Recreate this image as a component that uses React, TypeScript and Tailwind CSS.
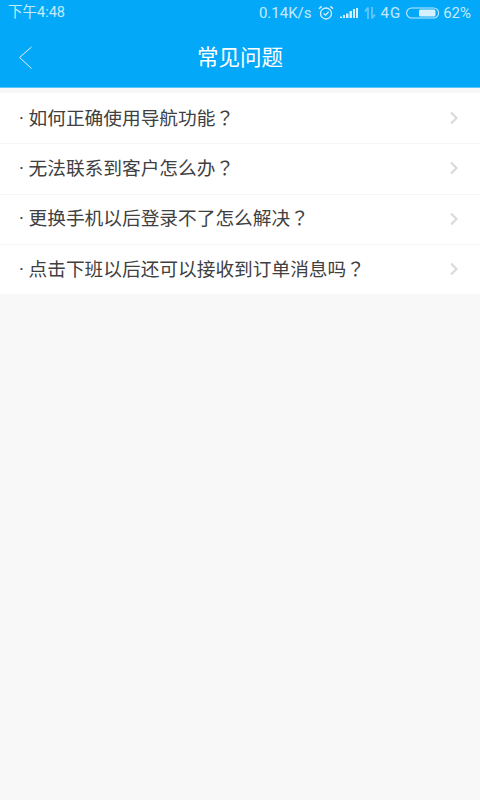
const faqs = [
  "如何正确使用导航功能",
  "无法联系到客户怎么办",
  "更换手机以后登录不了怎么解决",
  "点击下班以后还可以接收到订单消息吗",
];

const cjk = "font-['Roboto','Noto_Sans_CJK_SC',sans-serif]";

const StatusBar = () => (
  <div className="flex h-[26px] items-center justify-between pl-2 pr-[9px] text-[15px] leading-none text-[#c4e9fd]">
    <span className="pt-[1px] text-[14.5px]">下午4:48</span>
    <div className="flex items-center">
      <span>0.14K/s</span>
      <svg className="ml-[7px]" width="16" height="16" viewBox="0 0 16 16" fill="none" stroke="#d5f0fe" strokeWidth="1.3">
        <circle cx="8" cy="8.5" r="5.5" />
        <path d="M5.5 8.4 7.6 10.2 10.6 6.8" />
        <path d="M1 3.8 3.6 1.4M15 3.8 12.4 1.4" strokeWidth="1.5" />
      </svg>
      <svg className="ml-[6px]" width="18" height="12" viewBox="0 0 18 12" fill="#d5f0fe">
        <path d="M0 9.5h2V11H0zM3 8h2v3H3zM6 6.5h2.5V11H6zM9.5 4H12v7H9.5zM13 2h2v9h-2zM16 1h2v10h-2z" />
      </svg>
      <svg className="ml-[6px]" width="12" height="14" viewBox="0 0 12 14" fill="none" stroke="#62c6fa" strokeWidth="1.8">
        <path d="M4 13V1.5M4 1.5 1 5.5" />
        <path d="M8 1v11.5M8 12.5 11 8.5" />
      </svg>
      <span className="ml-[4px] tracking-[1px]">4G</span>
      <svg className="ml-[5px]" width="34" height="12" viewBox="0 0 34 12" fill="none">
        <rect x="0.6" y="1" width="32" height="10" rx="5" stroke="#c4e9fd" strokeWidth="1.1" />
        <rect x="13" y="2.6" width="16.5" height="6.8" rx="1.5" fill="#d5f0fe" />
      </svg>
      <span className="ml-[3px]">62%</span>
    </div>
  </div>
);

export default function App() {
  return (
    <div className={`${cjk} flex h-[800px] w-[480px] flex-col overflow-hidden bg-[#f8f8f8]`}>
      <div className="bg-[#03a9f8]">
        <StatusBar />
        <div className="relative flex h-[61px] items-center justify-center pt-[3px]">
          <svg className="absolute left-[18px] top-[20px]" width="15" height="24" viewBox="0 0 15 24" fill="none" stroke="#e6f6fe" strokeWidth="1">
            <path d="M13.5 1 1.5 11.5 13.5 22.5" />
          </svg>
          <span className="text-[21.5px] leading-none text-white">常见问题</span>
        </div>
      </div>
      <div className="h-[1px] bg-[#5cc8fa]" />
      <div className="mt-[5px] bg-white">
        {faqs.map((q, i) => (
          <div
            key={q}
            className={`flex h-[50.25px] items-center justify-between pl-[19px] pr-[21px] ${i > 0 ? "shadow-[inset_0_1px_0_#f5f5f5]" : ""}`}
          >
            <span className="text-[18.7px] leading-none text-[#404040]">
              · {q}
              <span className="font-['Noto_Sans_CJK_TC',sans-serif]">？</span>
            </span>
            <svg width="10" height="14" viewBox="0 0 10 14" fill="none" stroke="#dadada" strokeWidth="2.2">
              <path d="M2 1.5 7.5 7 2 12.5" />
            </svg>
          </div>
        ))}
      </div>
    </div>
  );
}
